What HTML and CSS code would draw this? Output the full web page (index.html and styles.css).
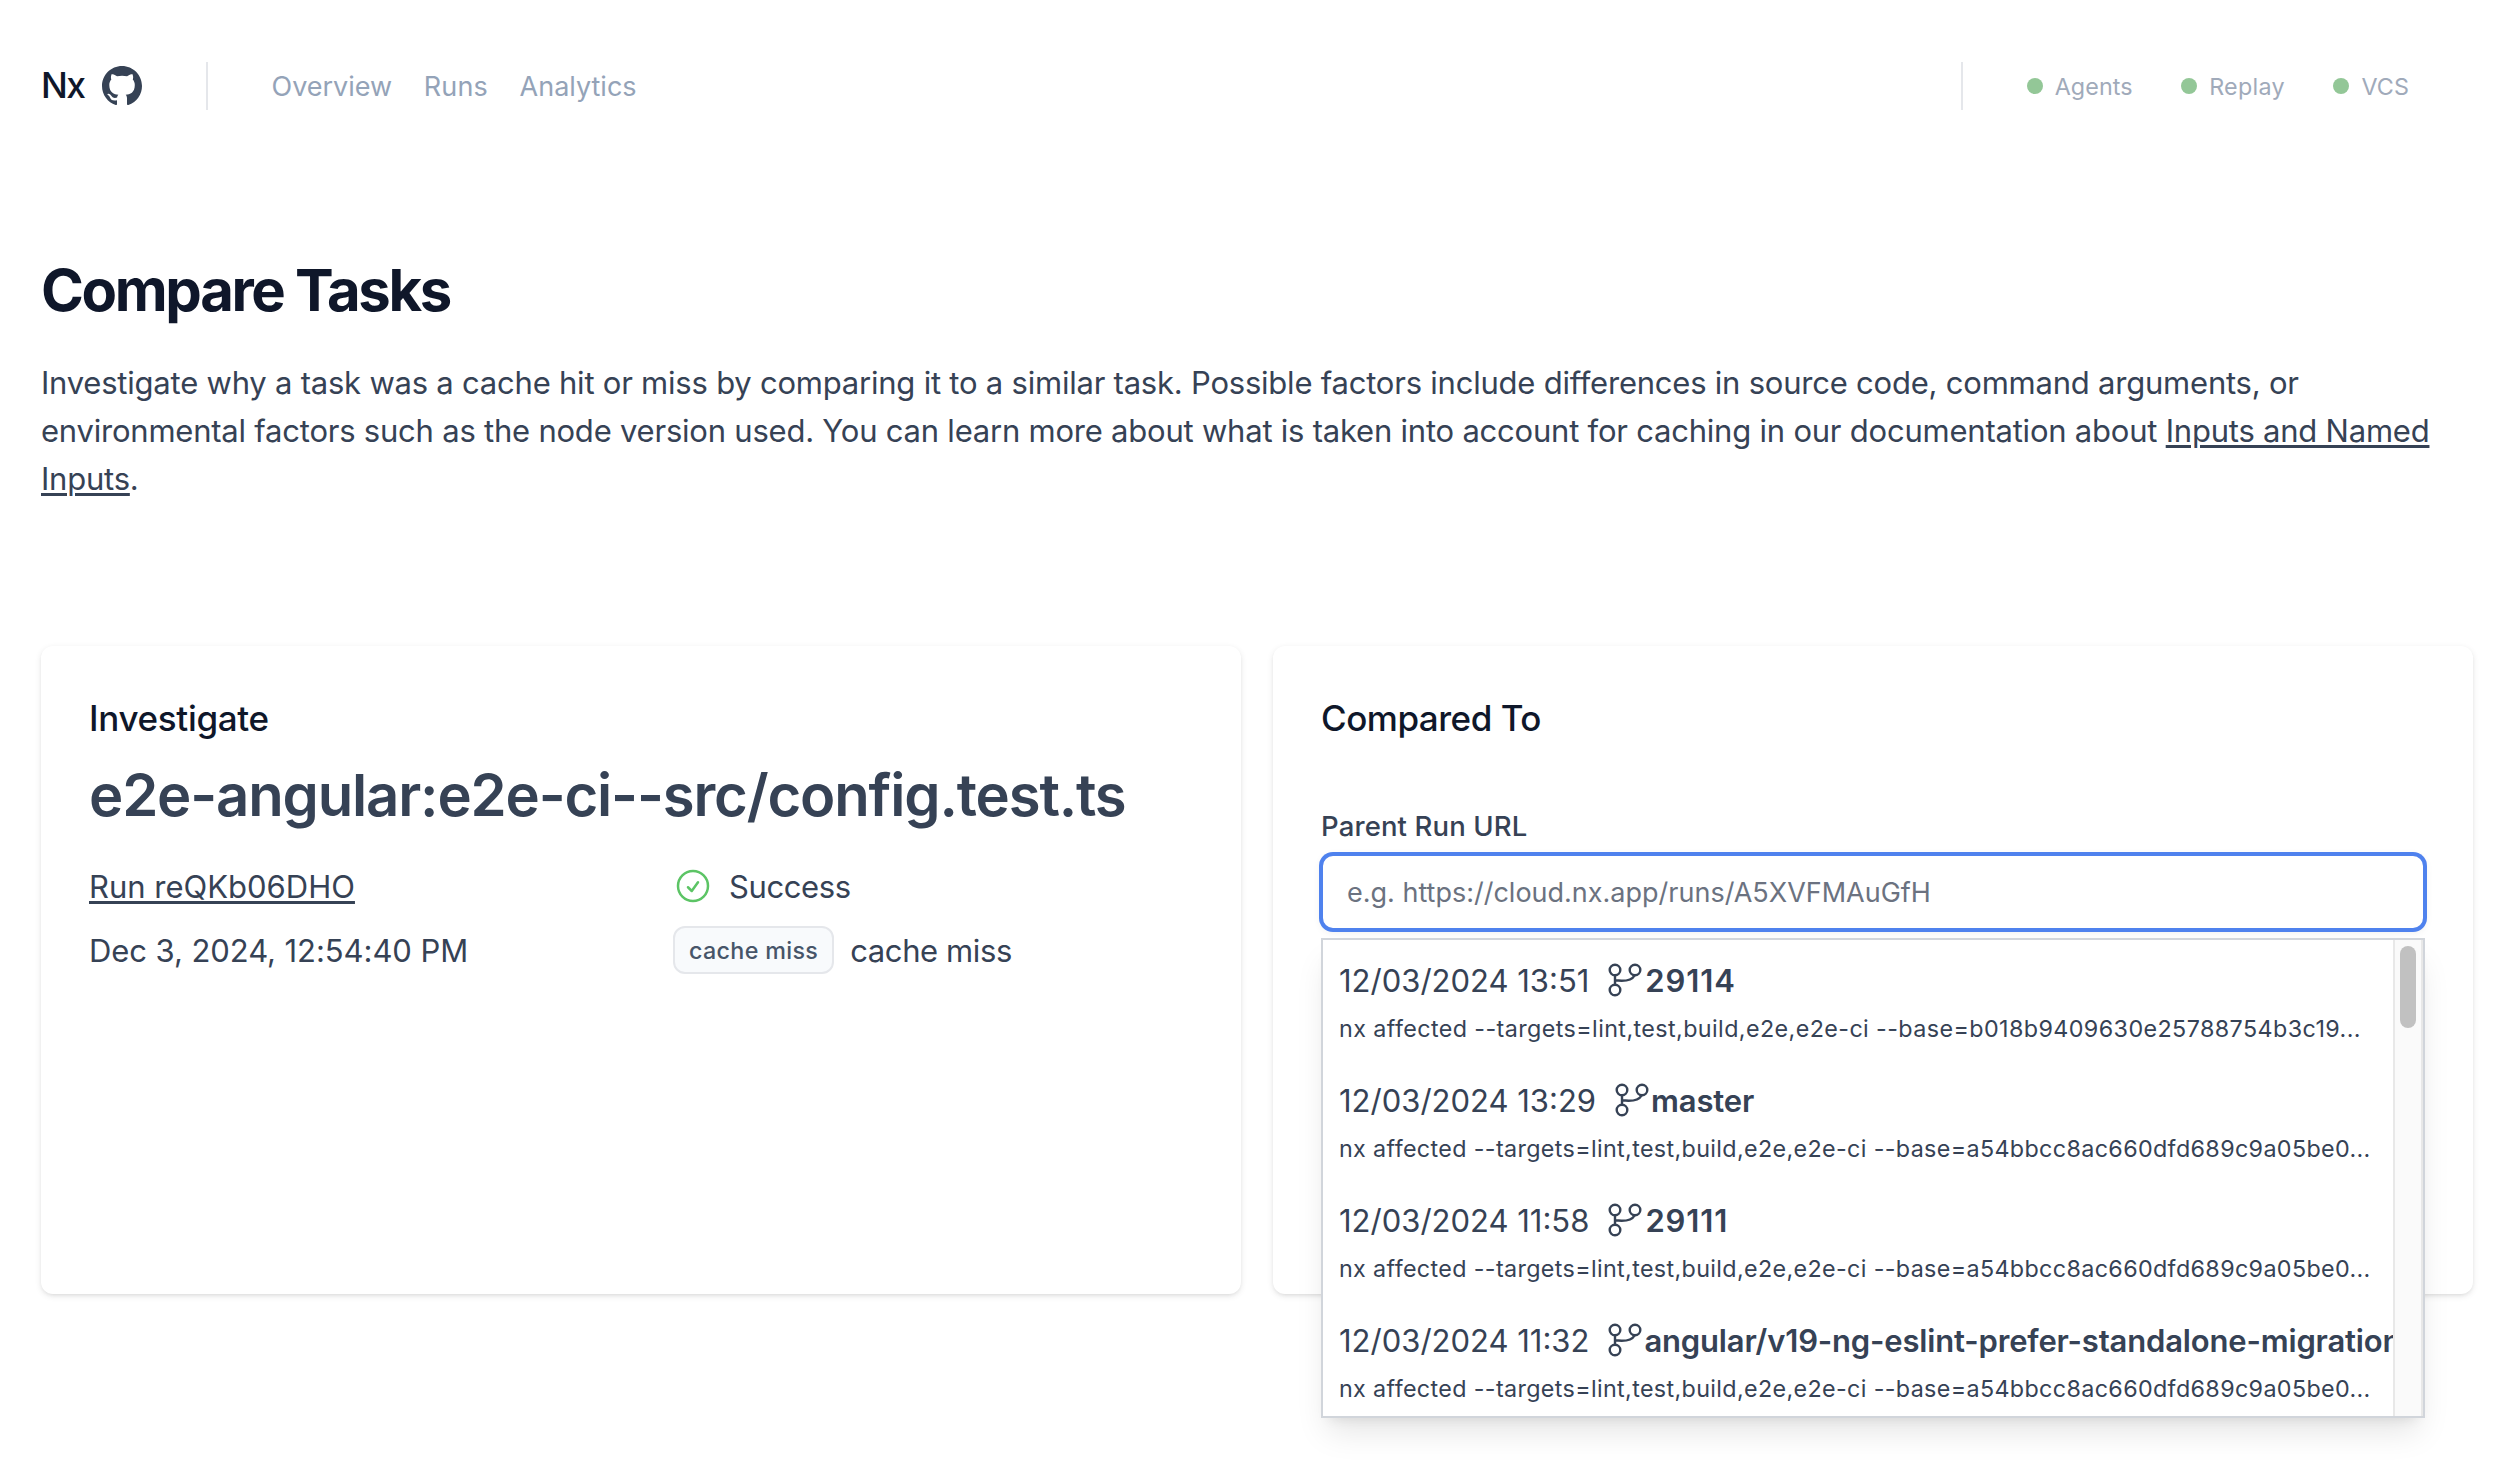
FILE: index.html
```html
<!DOCTYPE html>
<html lang="en">
<head>
<meta charset="utf-8">
<title>Compare Tasks</title>
<link rel="stylesheet" href="styles.css">
</head>
<body>
<svg class="sprite" aria-hidden="true">
  <symbol id="branch" viewBox="0 0 36 36">
    <g fill="none" stroke="currentColor" stroke-width="2.4" stroke-linecap="round">
      <circle cx="8" cy="8" r="5.3"/><circle cx="8" cy="28" r="5.3"/><circle cx="28" cy="8" r="5.3"/>
      <path d="M8 13.500v9M8 18.300c9 1.200 16.500 .8 19.600-4.800"/>
    </g>
  </symbol>
</svg>
<header class="topbar">
  <a class="brand">Nx</a>
  <svg class="github" viewBox="0 0 16 16" aria-label="GitHub"><path fill="currentColor" d="M8 0C3.58 0 0 3.58 0 8c0 3.54 2.29 6.53 5.47 7.59.4.07.55-.17.55-.38 0-.19-.01-.82-.01-1.49-2.01.37-2.53-.49-2.69-.94-.09-.23-.48-.94-.82-1.13-.28-.15-.68-.52-.01-.53.63-.01 1.08.58 1.23.82.72 1.21 1.87.87 2.33.66.07-.52.28-.87.51-1.07-1.78-.2-3.64-.89-3.64-3.95 0-.87.31-1.59.82-2.15-.08-.2-.36-1.02.08-2.12 0 0 .67-.21 2.200.82.64-.18 1.320-.27 2-.27s1.360.09 2 .27c1.530-1.040 2.200-.82 2.200-.82.44 1.100.16 1.920.08 2.120.51.56.82 1.270.82 2.150 0 3.070-1.870 3.750-3.650 3.950.29.25.54.73.54 1.480 0 1.070-.01 1.930-.01 2.200 0 .21.15.46.55.38A8.010 8.010 0 0 0 16 8c0-4.420-3.580-8-8-8z"/></svg>
  <span class="divider"></span>
  <nav class="nav"><a>Overview</a><a class="nav-short">Runs</a><a>Analytics</a></nav>
  <div class="status">
    <span class="divider"></span>
    <span class="status-item"><i class="dot"></i><span>Agents</span></span>
    <span class="status-item status-wide"><i class="dot"></i><span>Replay</span></span>
    <span class="status-item"><i class="dot"></i><span>VCS</span></span>
  </div>
</header>
<main class="main">
  <h1 class="page-title">Compare Tasks</h1>
  <p class="intro">Investigate why a task was a cache hit or miss by comparing it to a similar task. Possible factors include differences in source code, command arguments, or<br>environmental factors such as the node version used. You can learn more about what is taken into account for caching in our documentation about <a class="link">Inputs and Named<br>Inputs</a>.</p>
  <div class="cards">
    <section class="card">
      <h2 class="card-title">Investigate</h2>
      <h3 class="task">e2e-angular:e2e-ci--src/config.test.ts</h3>
      <div class="facts">
        <div class="fact"><a class="link fact-text">Run reQKb06DHO</a></div>
        <div class="fact fact-tight">
          <svg class="check" viewBox="0 0 24 24" fill="none" stroke="currentColor" stroke-width="1.5" stroke-linecap="round" stroke-linejoin="round"><path d="M9 12.75 11.250 15 15 9.750M21 12a9 9 0 1 1-18 0 9 9 0 0 1 18 0Z"/></svg>
          <span class="fact-text">Success</span>
        </div>
        <div class="fact"><span class="fact-text date">Dec 3, 2024, 12:54:40 PM</span></div>
        <div class="fact fact-tight"><span class="badge">cache miss</span><span class="fact-text">cache miss</span></div>
      </div>
    </section>
    <section class="card">
      <h2 class="card-title card-title-tight">Compared To</h2>
      <div class="field">
        <label class="label" for="run-url">Parent Run URL</label>
        <input class="input" id="run-url" type="text" placeholder="e.g. https://cloud.nx.app/runs/A5XVFMAuGfH">
        <div class="menu">
          <ul class="options">
            <li class="option">
              <div class="option-head"><span>12/03/2024 13:51</span><svg class="branch"><use href="#branch"/></svg><b class="ref ref-number">29114</b></div>
              <div class="command">nx affected --targets=lint,test,build,e2e,e2e-ci --base=b018b9409630e25788754b3c19...</div>
            </li>
            <li class="option">
              <div class="option-head"><span>12/03/2024 13:29</span><svg class="branch"><use href="#branch"/></svg><b class="ref">master</b></div>
              <div class="command">nx affected --targets=lint,test,build,e2e,e2e-ci --base=a54bbcc8ac660dfd689c9a05be0...</div>
            </li>
            <li class="option">
              <div class="option-head"><span>12/03/2024 11:58</span><svg class="branch"><use href="#branch"/></svg><b class="ref ref-number">29111</b></div>
              <div class="command">nx affected --targets=lint,test,build,e2e,e2e-ci --base=a54bbcc8ac660dfd689c9a05be0...</div>
            </li>
            <li class="option">
              <div class="option-head"><span>12/03/2024 11:32</span><svg class="branch"><use href="#branch"/></svg><b class="ref">angular/v19-ng-eslint-prefer-standalone-migration</b></div>
              <div class="command">nx affected --targets=lint,test,build,e2e,e2e-ci --base=a54bbcc8ac660dfd689c9a05be0...</div>
            </li>
          </ul>
          <div class="scrollbar"><div class="thumb"></div></div>
        </div>
      </div>
    </section>
  </div>
</main>
</body>
</html>
```
FILE: styles.css
```css
* { box-sizing: border-box; margin: 0; padding: 0; }

body {
  min-height: 1466px;
  overflow: hidden;
  background: #fff;
  color: #364255;
  font: 400 31px/48px Inter, sans-serif;
}

.sprite { position: absolute; width: 0; height: 0; }

/* Top bar */
.topbar {
  display: flex;
  align-items: center;
  height: 172px;
  padding: 0 105px 0 41px;
}
.brand { width: 61px; font-size: 35.5px; font-weight: 500; letter-spacing: -1.5px; color: #0f172a; }
.github { width: 40px; height: 40px; }
.divider { width: 2px; height: 48px; background: #e5e7eb; }
.topbar > .divider { margin-left: 64px; }
.nav { display: flex; gap: 31.5px; margin-left: 63.5px; padding-top: 2px; font-size: 27px; color: #94a3b8; }
.nav-short { letter-spacing: .2px; }
.status { display: flex; align-items: center; gap: 48.5px; margin-left: auto; font-size: 23.3px; color: #a0aaba; }
.status .divider { margin-right: 15px; }
.status-item { display: flex; align-items: center; gap: 12px; letter-spacing: .1px; }
.status-item span { padding-top: 2px; }
.status-wide { letter-spacing: .3px; }
.dot { width: 16px; height: 16px; border-radius: 50%; background: #93c797; }

/* Page intro */
.main { padding: 82px 41px 0; }
.page-title { margin-bottom: 33px; font-size: 58px; line-height: 72px; font-weight: 700; letter-spacing: -2.35px; color: #0f172a; }
.intro { letter-spacing: -.22px; white-space: nowrap; }
.link { text-decoration: underline; text-decoration-thickness: 3px; text-underline-offset: 3px; color: inherit; }

/* Cards */
.cards { display: grid; grid-template-columns: 1fr 1fr; gap: 32px; margin-top: 143px; }
.card {
  height: 648px;
  padding: 48px;
  border-radius: 12px;
  background: #fff;
  box-shadow: 0 2px 6px rgba(0, 0, 0, .1), 0 2px 4px -2px rgba(0, 0, 0, .1);
}
.card-title { font-size: 35px; line-height: 48px; font-weight: 500; letter-spacing: -.32px; color: #0f172a; }
.card-title-tight { letter-spacing: -.5px; }
.task { margin: 17px 0 31px; font-size: 58px; line-height: 72px; font-weight: 600; letter-spacing: -1.16px; }
.facts { display: grid; grid-template-columns: 1fr 1fr; gap: 16px 64px; }
.fact { display: flex; align-items: center; gap: 16px; height: 48px; }
.fact-text { padding-top: 2px; }
.fact-tight { letter-spacing: -.4px; }
.date { letter-spacing: -.07px; }
.check { width: 40px; height: 40px; color: #5cc465; }
.badge {
  height: 48px;
  padding: 1px 14px 0;
  border: 2px solid #e5e7eb;
  border-radius: 12px;
  background: #f8fafc;
  color: #475569;
  font-size: 23.3px;
  line-height: 44px;
  font-weight: 500;
  letter-spacing: .33px;
}

/* Run picker */
.field { position: relative; margin-top: 64px; }
.label { display: block; font-size: 27.5px; line-height: 40px; font-weight: 500; letter-spacing: .13px; }
.input {
  display: block;
  width: 100%;
  height: 76px;
  margin-top: 8px;
  padding: 0 24px;
  border: 2px solid #4f82ee;
  border-radius: 12px;
  outline: none;
  box-shadow: 0 0 0 2px #4f82ee, 0 2px 8px rgba(0, 0, 0, .08);
  background: #fff;
  font: 400 27px/40px Inter, sans-serif;
}
.input::placeholder { color: #6b7280; opacity: 1; }
.menu {
  position: absolute;
  top: 132px;
  left: 0;
  right: 0;
  display: flex;
  height: 480px;
  border: 2px solid #d1d5db;
  background: #fff;
  box-shadow: 0 20px 30px -6px rgba(0, 0, 0, .1), 0 8px 12px -8px rgba(0, 0, 0, .1);
}
.options { flex: 1; min-width: 0; overflow: hidden; list-style: none; }
.option { height: 120px; padding: 17px 16px 7px; white-space: nowrap; }
.option-head { display: flex; align-items: center; height: 48px; }
.branch { flex: none; width: 36px; height: 36px; margin: 0 1px 2px 18px; }
.ref { font-weight: 600; letter-spacing: -.17px; }
.ref-number { margin-left: 1px; letter-spacing: .9px; }
.command { font-size: 23.3px; letter-spacing: .36px; }
.option:first-child .command { letter-spacing: .41px; }
.scrollbar {
  width: 30px;
  padding: 6px 5px;
  border: solid #e8e8e8;
  border-width: 0 2px;
  background: #fafafa;
}
.thumb { width: 16px; height: 82px; border-radius: 8px; background: #c1c1c1; }
```
